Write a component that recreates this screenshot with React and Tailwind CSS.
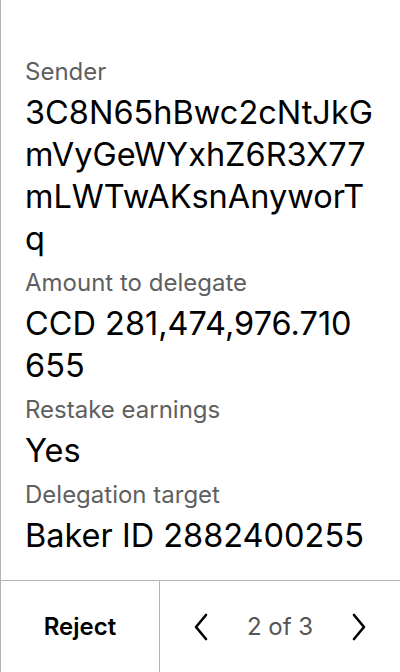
import React from "react";

const Field = ({ label, lines }) => (
  <div className="flex flex-col">
    <div className="text-[24px] leading-[30px] text-[#5f5f5f]">{label}</div>
    <div className="mt-[5px] flex flex-col text-[32.5px] leading-[42px] text-black">
      {lines.map((l) => (
        <span key={l} className="whitespace-nowrap">{l}</span>
      ))}
    </div>
  </div>
);

export default function App() {
  return (
    <div
      className="w-[400px] h-[672px] bg-white border-l border-[#b3b3b3] flex flex-col overflow-hidden"
      style={{ fontFamily: "Inter, 'Noto Sans', sans-serif" }}
    >
      <div className="flex-1 flex flex-col gap-2 pl-6 pr-6 pt-[57px]">
        <Field
          label="Sender"
          lines={["3C8N65hBwc2cNtJkG", "mVyGeWYxhZ6R3X77", "mLWTwAKsnAnyworT", "q"]}
        />
        <Field label="Amount to delegate" lines={["CCD 281,474,976.710", "655"]} />
        <Field label="Restake earnings" lines={["Yes"]} />
        <Field label="Delegation target" lines={["Baker ID 2882400255"]} />
      </div>
      <div className="h-[92px] border-t border-[#b3b3b3] flex">
        <div className="w-[159px] border-r border-[#b3b3b3] flex items-center justify-center text-[24px] font-semibold text-black">
          Reject
        </div>
        <div className="flex-1 flex items-center justify-between px-[30px]">
          <svg width="24" height="30" viewBox="0 0 24 30" fill="none">
            <path d="M16 3 L6 15 L16 27" stroke="black" strokeWidth="2.6" strokeLinecap="round" strokeLinejoin="round" />
          </svg>
          <span className="text-[24px] text-[#555]">2 of 3</span>
          <svg width="24" height="30" viewBox="0 0 24 30" fill="none">
            <path d="M8 3 L18 15 L8 27" stroke="black" strokeWidth="2.6" strokeLinecap="round" strokeLinejoin="round" />
          </svg>
        </div>
      </div>
    </div>
  );
}
